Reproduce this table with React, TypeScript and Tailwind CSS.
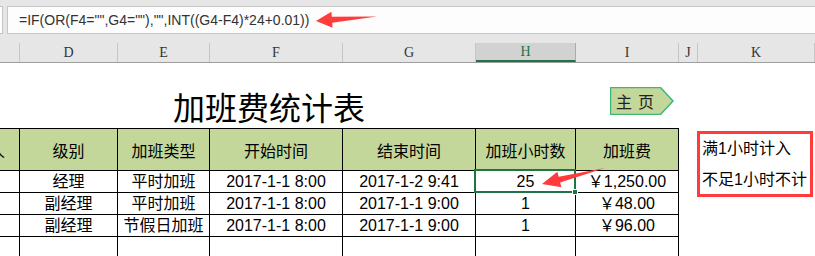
import React from "react";

const cols = [
  { key: "C", w: "w-[20px]" },
  { key: "D", w: "w-[98px]" },
  { key: "E", w: "w-[92px]" },
  { key: "F", w: "w-[133px]" },
  { key: "G", w: "w-[133px]" },
  { key: "H", w: "w-[100px]" },
  { key: "I", w: "w-[103px]" },
  { key: "J", w: "w-[19px]" },
  { key: "K", w: "flex-1" },
];

const headers = ["级别", "加班类型", "开始时间", "结束时间", "加班小时数", "加班费"];

const rows = [
  ["经理", "平时加班", "2017-1-1 8:00", "2017-1-2 9:41", "25", "￥1,250.00"],
  ["副经理", "平时加班", "2017-1-1 8:00", "2017-1-1 9:00", "1", "￥48.00"],
  ["副经理", "节假日加班", "2017-1-1 8:00", "2017-1-1 9:00", "1", "￥96.00"],
  ["", "", "", "", "", ""],
];

export default function App() {
  return (
    <div className="relative w-[815px] h-[256px] overflow-hidden bg-white font-['Liberation_Sans','Noto_Sans_CJK_SC',sans-serif] text-black">
      {/* formula bar */}
      <div className="h-[43px] bg-[#e6e6e6] pt-[6px] flex items-start">
        <div className="w-[3px] h-[28px] bg-[#fdfdfd] border-y border-r border-[#c6c6c6]" />
        <div className="ml-[4px] flex-1 h-[28px] bg-[#fdfdfd] border-y border-l border-[#c6c6c6] flex items-center pl-[11px] text-[14px] text-[#333]">
          =IF(OR(F4="",G4=""),"",INT((G4-F4)*24+0.01))
        </div>
      </div>

      {/* column letters */}
      <div className="h-[20px] bg-[#e6e6e6] border-b border-[#9f9f9f] flex font-['Liberation_Serif',serif] text-[14px] text-[#333]">
        {cols.map((c) =>
          c.key === "H" ? (
            <div
              key={c.key}
              className={`${c.w} shrink-0 bg-[#d2d2d2] border-r border-[#ababab] border-b-2 border-b-[#217346] flex items-center justify-center text-[#217346] leading-none`}
            >
              {c.key}
            </div>
          ) : (
            <div
              key={c.key}
              className={`${c.w} shrink-0 border-r border-[#c6c6c6] flex items-center justify-center leading-none`}
            >
              {c.key === "C" ? "" : c.key}
            </div>
          )
        )}
      </div>

      {/* sheet */}
      <div className="grid grid-cols-[20px_98px_92px_133px_133px_100px_103px_19px_1fr] grid-rows-[65px_43px_22px_22px_22px_22px]">
        {/* title row */}
        <div className="col-span-9 flex items-start">
          <div className="w-[610px] shrink-0 pl-[173px] pt-[27px] text-[32px] leading-[32px] font-['Noto_Sans_CJK_SC',sans-serif]">
            加班费统计表
          </div>
          <div className="relative mt-[24px] w-[64px] h-[28px]">
            <svg width="64" height="28" viewBox="0 0 64 28" className="absolute inset-0">
              <polygon
                points="0.5,0.5 50.5,0.5 63,14 50.5,27.5 0.5,27.5"
                fill="#c4d79b"
                stroke="#3cb878"
                strokeWidth="1.5"
              />
            </svg>
            <div className="relative w-[50px] h-full flex items-center justify-center text-[16px] tracking-[6px] pl-[6px] text-[#222] font-['Noto_Sans_CJK_SC',sans-serif]">
              主页
            </div>
          </div>
        </div>

        {/* header row; column C only shows the tail of its label */}
        <div className="bg-[#c4d79b] border-y border-r border-black overflow-hidden flex items-center justify-start text-[16px]">
          <span className="ml-[-11px] font-['Noto_Sans_CJK_SC',sans-serif]">人</span>
        </div>
        {headers.map((h) => (
          <div
            key={h}
            className="bg-[#c4d79b] border-y border-r border-black flex items-center justify-center text-[16px] font-['Noto_Sans_CJK_SC',sans-serif]"
          >
            {h}
          </div>
        ))}
        <div />
        {/* note box in K */}
        <div className="row-span-5 pt-[3px]">
          <div className="ml-[-1px] w-[116px] h-[66px] border-[3px] border-[#ff3b3b] pl-[2px] pt-[4px] flex flex-col gap-[9px] text-[16px] whitespace-nowrap">
            <div className="h-[22px] leading-[22px]">满1小时计入</div>
            <div className="h-[22px] leading-[22px]">不足1小时不计</div>
          </div>
        </div>

        {/* data rows */}
        {rows.map((r, ri) => (
          <React.Fragment key={ri}>
            <div className="border-r border-b border-black" />
            {r.map((v, ci) => (
              <div
                key={ci}
                className="relative border-r border-b border-black flex items-center justify-center text-[16px] whitespace-nowrap"
              >
                {v}
                {ri === 0 && ci === 4 && (
                  <div className="absolute left-[-2px] top-[-2px] w-[102px] h-[24px] border-2 border-[#217346] z-10">
                    <div className="absolute right-[-4px] bottom-[-4px] w-[6px] h-[6px] bg-[#217346] border border-white" />
                  </div>
                )}
              </div>
            ))}
            <div />
          </React.Fragment>
        ))}
      </div>

      {/* red arrows drawn over the sheet */}
      <svg width="815" height="256" className="absolute inset-0 pointer-events-none z-20">
        <polygon
          points="316,21 331.4,11.8 331.8,16.8 377,16.5 332.2,22.8 332.6,27.8"
          fill="#ff3b3b"
        />
        <polygon
          points="542,184 557.4,171.8 558.7,176.7 605,168 560.1,182.5 561.4,187.3"
          fill="#ff3b3b"
        />
      </svg>
    </div>
  );
}
